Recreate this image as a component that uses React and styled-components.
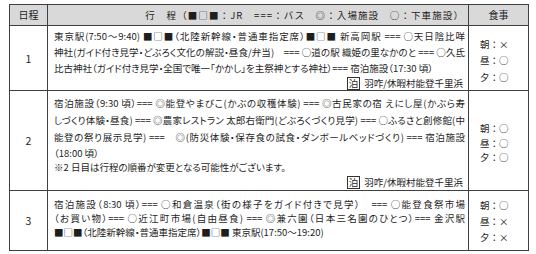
import React from "react";
import styled, { createGlobalStyle } from "styled-components";

const Global = createGlobalStyle`
  html, body { margin: 0; padding: 0; background: #fff; }
  body {
    font-family: "Noto Sans CJK JP", "Noto Sans", sans-serif;
    color: #1e1e1e;
  }
`;

const Table = styled.table`
  border-collapse: collapse;
  table-layout: fixed;
  width: 519px;
  margin: 4px 0 0 9px;
  font-size: 9.5px;
`;

const Col = styled.col`
  width: ${(p) => p.$w}px;
`;

const Head = styled.th`
  height: 20px;
  padding: 0 ${(p) => (p.$right ? "4px" : "0")} 0 0;
  background: #d9d9d9;
  border: 1px solid #3f3f3f;
  font-weight: normal;
  font-size: ${(p) => (p.$right ? "9.5px" : "10px")};
  letter-spacing: ${(p) => (p.$right ? "1.1px" : "0")};
  line-height: 20px;
  text-align: ${(p) => (p.$right ? "right" : "center")};
  white-space: nowrap;
`;

const Row = styled.tr`
  height: ${(p) => p.$h}px;
`;

const DayCell = styled.td`
  border: 1px solid #3f3f3f;
  text-align: center;
  vertical-align: middle;
  font-size: 10.5px;
  padding: 0;
`;

const PlanCell = styled.td`
  border: 1px solid #3f3f3f;
  vertical-align: top;
  padding: ${(p) => p.$pt}px 3px 0 6px;
  font-feature-settings: "palt";
`;

const Line = styled.div`
  line-height: ${(p) => p.$lh}px;
  height: ${(p) => p.$lh}px;
  text-align: ${(p) => (p.$justify ? "justify" : "left")};
  text-align-last: ${(p) => (p.$justify ? "justify" : "auto")};
`;

const StayLine = styled.div`
  display: flex;
  justify-content: flex-end;
  align-items: center;
  gap: 4px;
  height: ${(p) => p.$lh}px;
  padding-right: 2px;
`;

const StayBadge = styled.span`
  display: inline-block;
  border: 1px solid #333;
  line-height: 11px;
  padding: 0 1px;
`;

const MealCell = styled.td`
  border: 1px solid #3f3f3f;
  vertical-align: middle;
  padding: ${(p) => p.$pt || 0}px 0 0 11px;
  font-size: 9.5px;
`;

const Meal = styled.div`
  line-height: ${(p) => p.$lh}px;
`;

const days = [
  {
    day: "1",
    h: 63,
    pt: 2,
    lines: [
      { t: "東京駅(7:50～9:40) ■□■（北陸新幹線・普通車指定席）■□■ 新高岡駅 === ○天日陰比咩", j: true, lh: 16 },
      { t: "神社(ガイド付き見学・どぶろく文化の解説・昼食/弁当)　=== ○道の駅 織姫の里なかのと === ○久氐", j: true, lh: 16 },
      { t: "比古神社（ガイド付き見学・全国で唯一「かかし」を主祭神とする神社）=== 宿泊施設（17:30 頃）", j: false, lh: 16 },
    ],
    stay: 14,
    meals: ["朝：×", "昼：○", "夕：○"],
    mealLh: 16.5,
    mealPt: 5,
  },
  {
    day: "2",
    h: 100,
    pt: 4,
    lines: [
      { t: "宿泊施設（9:30 頃）=== ◎能登やまびこ(かぶの収穫体験) === ◎古民家の宿 えにし屋(かぶら寿", j: true, lh: 17 },
      { t: "しづくり体験・昼食) === ◎農家レストラン 太郎右衛門(どぶろくづくり見学) === ○ふるさと創修館(中", j: true, lh: 17 },
      { t: "能登の祭り展示見学) ===　◎(防災体験・保存食の試食・ダンボールベッドづくり) === 宿泊施設", j: true, lh: 17 },
      { t: "（18:00 頃）", j: false, lh: 14 },
      { t: "※2 日目は行程の順番が変更となる可能性がございます。", j: false, lh: 14 },
    ],
    stay: 16,
    meals: ["朝：○", "昼：○", "夕：○"],
    mealLh: 14.5,
    mealPt: 5,
  },
  {
    day: "3",
    h: 60,
    pt: 6,
    lines: [
      { t: "宿泊施設（8:30 頃）=== ○和倉温泉（街の様子をガイド付きで見学）　=== ○能登食祭市場", j: true, lh: 14 },
      { t: "（お買い物）=== ○近江町市場(自由昼食) === ◎兼六園（日本三名園のひとつ）=== 金沢駅", j: true, lh: 14 },
      { t: "■□■（北陸新幹線・普通車指定席）■□■ 東京駅(17:50～19:20)", j: false, lh: 14 },
    ],
    stay: 0,
    meals: ["朝：○", "昼：×", "夕：×"],
    mealLh: 16,
    mealPt: 1,
  },
];

export default function App() {
  return (
    <>
      <Global />
      <Table>
        <colgroup>
          <Col $w={38} />
          <Col $w={421} />
          <Col $w={60} />
        </colgroup>
        <thead>
          <tr>
            <Head>日程</Head>
            <Head $right>行　程（■□■：JR　===：バス　◎：入場施設　○：下車施設）</Head>
            <Head>食事</Head>
          </tr>
        </thead>
        <tbody>
          {days.map((d) => (
            <Row key={d.day} $h={d.h}>
              <DayCell>{d.day}</DayCell>
              <PlanCell $pt={d.pt}>
                {d.lines.map((l, i) => (
                  <Line key={i} $lh={l.lh} $justify={l.j}>
                    {l.t}
                  </Line>
                ))}
                {d.stay > 0 && (
                  <StayLine $lh={d.stay}>
                    <StayBadge>泊</StayBadge>
                    <span>羽咋/休暇村能登千里浜</span>
                  </StayLine>
                )}
              </PlanCell>
              <MealCell $pt={d.mealPt}>
                {d.meals.map((m) => (
                  <Meal key={m} $lh={d.mealLh}>
                    {m}
                  </Meal>
                ))}
              </MealCell>
            </Row>
          ))}
        </tbody>
      </Table>
    </>
  );
}
